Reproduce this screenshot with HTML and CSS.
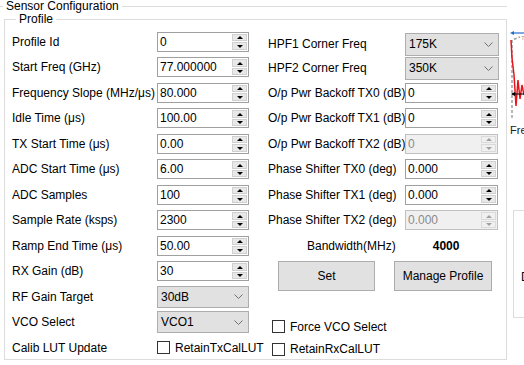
FILE: index.html
```html
<!DOCTYPE html>
<html lang="en">

<head>
    <meta charset="UTF-8">
    <title>Sensor Configuration</title>
    <link rel="stylesheet" href="styles.css">
</head>

<body>
    <div class="window">
        <fieldset class="group sensor">
            <legend>Sensor Configuration</legend>
            <fieldset class="group profile">
                <legend>Profile</legend>
                <div class="cols">
                    <div class="col left">
                        <div class="row"><label>Profile Id</label>
                            <div class="spin"><span>0</span><div class="arrows"><i class="up"></i><i class="down"></i></div></div>
                        </div>
                        <div class="row"><label>Start Freq (GHz)</label>
                            <div class="spin"><span>77.000000</span><div class="arrows"><i class="up"></i><i class="down"></i></div></div>
                        </div>
                        <div class="row"><label>Frequency Slope (MHz/μs)</label>
                            <div class="spin"><span>80.000</span><div class="arrows"><i class="up"></i><i class="down"></i></div></div>
                        </div>
                        <div class="row"><label>Idle Time (μs)</label>
                            <div class="spin"><span>100.00</span><div class="arrows"><i class="up"></i><i class="down"></i></div></div>
                        </div>
                        <div class="row"><label>TX Start Time (μs)</label>
                            <div class="spin"><span>0.00</span><div class="arrows"><i class="up"></i><i class="down"></i></div></div>
                        </div>
                        <div class="row"><label>ADC Start Time (μs)</label>
                            <div class="spin"><span>6.00</span><div class="arrows"><i class="up"></i><i class="down"></i></div></div>
                        </div>
                        <div class="row"><label>ADC Samples</label>
                            <div class="spin"><span>100</span><div class="arrows"><i class="up"></i><i class="down"></i></div></div>
                        </div>
                        <div class="row"><label>Sample Rate (ksps)</label>
                            <div class="spin"><span>2300</span><div class="arrows"><i class="up"></i><i class="down"></i></div></div>
                        </div>
                        <div class="row"><label>Ramp End Time (μs)</label>
                            <div class="spin"><span>50.00</span><div class="arrows"><i class="up"></i><i class="down"></i></div></div>
                        </div>
                        <div class="row"><label>RX Gain (dB)</label>
                            <div class="spin"><span>30</span><div class="arrows"><i class="up"></i><i class="down"></i></div></div>
                        </div>
                        <div class="row"><label>RF Gain Target</label>
                            <div class="combo small"><span>30dB</span>
                                <svg width="9" height="5" viewBox="0 0 9 5"><polyline points="0.5,0.5 4.5,4.5 8.5,0.5" fill="none" stroke="#707070" stroke-width="1"/></svg>
                            </div>
                        </div>
                        <div class="row"><label>VCO Select</label>
                            <div class="combo small"><span>VCO1</span>
                                <svg width="9" height="5" viewBox="0 0 9 5"><polyline points="0.5,0.5 4.5,4.5 8.5,0.5" fill="none" stroke="#707070" stroke-width="1"/></svg>
                            </div>
                        </div>
                        <div class="row"><label>Calib LUT Update</label>
                            <span class="check"></span><span class="check-text">RetainTxCalLUT</span>
                        </div>
                    </div>

                    <div class="col right">
                        <div class="row tight"><label>HPF1 Corner Freq</label>
                            <div class="combo"><span>175K</span>
                                <svg width="9" height="5" viewBox="0 0 9 5"><polyline points="0.5,0.5 4.5,4.5 8.5,0.5" fill="none" stroke="#707070" stroke-width="1"/></svg>
                            </div>
                        </div>
                        <div class="row tight"><label>HPF2 Corner Freq</label>
                            <div class="combo"><span>350K</span>
                                <svg width="9" height="5" viewBox="0 0 9 5"><polyline points="0.5,0.5 4.5,4.5 8.5,0.5" fill="none" stroke="#707070" stroke-width="1"/></svg>
                            </div>
                        </div>
                        <div class="row"><label>O/p Pwr Backoff TX0 (dB)</label>
                            <div class="spin wide"><span>0</span><div class="arrows"><i class="up"></i><i class="down"></i></div></div>
                        </div>
                        <div class="row"><label>O/p Pwr Backoff TX1 (dB)</label>
                            <div class="spin wide"><span>0</span><div class="arrows"><i class="up"></i><i class="down"></i></div></div>
                        </div>
                        <div class="row"><label>O/p Pwr Backoff TX2 (dB)</label>
                            <div class="spin wide disabled"><span>0</span><div class="arrows"><i class="up"></i><i class="down"></i></div></div>
                        </div>
                        <div class="row"><label>Phase Shifter TX0 (deg)</label>
                            <div class="spin wide"><span>0.000</span><div class="arrows"><i class="up"></i><i class="down"></i></div></div>
                        </div>
                        <div class="row"><label>Phase Shifter TX1 (deg)</label>
                            <div class="spin wide"><span>0.000</span><div class="arrows"><i class="up"></i><i class="down"></i></div></div>
                        </div>
                        <div class="row"><label>Phase Shifter TX2 (deg)</label>
                            <div class="spin wide disabled"><span>0.000</span><div class="arrows"><i class="up"></i><i class="down"></i></div></div>
                        </div>
                        <div class="row bandwidth">
                            <span class="bw-label">Bandwidth(MHz)</span>
                            <span class="bw-value">4000</span>
                        </div>
                        <div class="button-row">
                            <button class="btn">Set</button>
                            <button class="btn manage">Manage Profile</button>
                        </div>
                        <div class="check-row force">
                            <span class="check"></span><span class="check-text">Force VCO Select</span>
                        </div>
                        <div class="check-row rx">
                            <span class="check"></span><span class="check-text">RetainRxCalLUT</span>
                        </div>
                    </div>
                </div>
            </fieldset>
        </fieldset>

        <div class="side">
            <svg class="graph" width="17" height="140" viewBox="0 0 17 140">
                <line x1="5" y1="33" x2="17" y2="33" stroke="#1f6fc8" stroke-width="1.2"/>
                <polygon points="3,33 7,31 7,35" fill="#1f6fc8"/>
                <polyline points="5,118 5,40 13,37" fill="none" stroke="#a0a0a0" stroke-width="1.5" stroke-dasharray="3,2"/>
                <text x="14" y="40" font-size="6" fill="#a0a0a0" font-family="Liberation Sans, sans-serif">T</text>
                <polyline points="4,40 5,58 7,75 9,106 11,80 13,99 15,85 17,95" fill="none" stroke="#e8141c" stroke-width="1.5"/>
                <line x1="5" y1="94" x2="17" y2="94" stroke="#000" stroke-width="1"/>
                <polygon points="4,94 8,92 8,96" fill="#000"/>
                <text x="3" y="134" font-size="11" fill="#222" font-family="Liberation Sans, sans-serif">Fre</text>
            </svg>
            <fieldset class="group mini">
                <legend>C</legend>
                <span>D</span>
            </fieldset>
        </div>
    </div>
</body>

</html>
```

FILE: styles.css
```css
body {
    margin: 0;
    font-family: "Liberation Sans", Arial, sans-serif;
    font-size: 12px;
    color: #000;
    background: #fff;
}

.window {
    display: flex;
    width: 524px;
    height: 365px;
    overflow: hidden;
}

.group {
    margin: 0;
    min-width: 0;
    border: 1px solid #dcdcdc;
}

.group > legend {
    padding: 0 3px;
    line-height: 13px;
}

.sensor {
    flex-shrink: 0;
    width: 507px;
    height: 365px;
    padding: 0;
    box-sizing: border-box;
    border-left: none;
    border-right: none;
    border-bottom: none;
}

.sensor > legend {
    margin-left: 3px;
}

.profile {
    width: 503px;
    height: 347px;
    margin-left: 4px;
    padding: 3px 7px 0;
    box-sizing: border-box;
}

.profile > legend {
    margin-left: 4px;
}

.cols {
    display: flex;
    gap: 19px;
}

.col.left {
    width: 237px;
}

.col.right {
    width: 231px;
    padding-top: 3px;
}

.row {
    display: flex;
    align-items: center;
    height: 25.5px;
}

.row.tight {
    height: 24px;
    align-items: center;
}

.row label {
    flex-shrink: 0;
    width: 145px;
    white-space: nowrap;
}

.right .row label {
    width: 137px;
}

.spin {
    display: flex;
    align-items: center;
    width: 92px;
    height: 20px;
    box-sizing: border-box;
    border: 1px solid #a0a0a0;
    background: #fff;
}

.spin.wide {
    width: 93px;
}

.spin span {
    flex: 1;
    padding-left: 2px;
}

.arrows {
    display: flex;
    flex-direction: column;
    width: 15px;
    height: 16px;
    margin-right: 1px;
    gap: 1px;
}

.arrows i {
    flex: 1;
    display: flex;
    align-items: center;
    justify-content: center;
    background: #e8e8e8;
    border: 1px solid #d0d0d0;
    box-sizing: border-box;
}

.arrows .up::after {
    content: "";
    border-left: 3px solid transparent;
    border-right: 3px solid transparent;
    border-bottom: 3px solid #000;
}

.arrows .down::after {
    content: "";
    border-left: 3px solid transparent;
    border-right: 3px solid transparent;
    border-top: 3px solid #000;
}

.spin.disabled {
    background: #f0f0f0;
    border-color: #c0c0c0;
    color: #8a8a8a;
}

.spin.disabled .arrows i {
    background: #f0f0f0;
    border-color: #dadada;
}

.spin.disabled .arrows .up::after {
    border-bottom-color: #a0a0a0;
}

.spin.disabled .arrows .down::after {
    border-top-color: #a0a0a0;
}

.combo {
    display: flex;
    align-items: center;
    width: 94px;
    height: 23px;
    padding: 0 5px 0 3px;
    box-sizing: border-box;
    border: 1px solid #adadad;
    background: #e1e1e1;
}

.combo.small {
    width: 92px;
    height: 22px;
}

.combo svg {
    margin-left: auto;
}

.check {
    flex-shrink: 0;
    width: 13px;
    height: 13px;
    box-sizing: border-box;
    border: 1px solid #333;
    background: #fff;
}

.check-text {
    margin-left: 5px;
    white-space: nowrap;
}

.bw-label {
    margin-left: 39px;
}

.bw-value {
    margin-left: 37px;
    font-weight: bold;
}

.button-row {
    display: flex;
    margin-top: 2.5px;
    height: 30px;
}

.btn {
    width: 97px;
    height: 30px;
    margin-left: 10px;
    padding: 0;
    font-family: inherit;
    font-size: 12px;
    color: #000;
    background: #e1e1e1;
    border: 1px solid #adadad;
}

.btn.manage {
    width: 98px;
    margin-left: 19px;
}

.check-row {
    display: flex;
    align-items: center;
    padding-left: 4px;
}

.check-row.force {
    height: 23px;
    margin-top: 24px;
}

.check-row.rx {
    height: 22px;
}

.side {
    width: 17px;
    flex-shrink: 0;
}

.graph {
    display: block;
}

.mini {
    height: 114px;
    margin: 64px 0 0 6px;
    padding: 53px 0 0 7px;
    box-sizing: border-box;
    border-right: none;
}

.mini > legend {
    margin-left: 4px;
}
```
